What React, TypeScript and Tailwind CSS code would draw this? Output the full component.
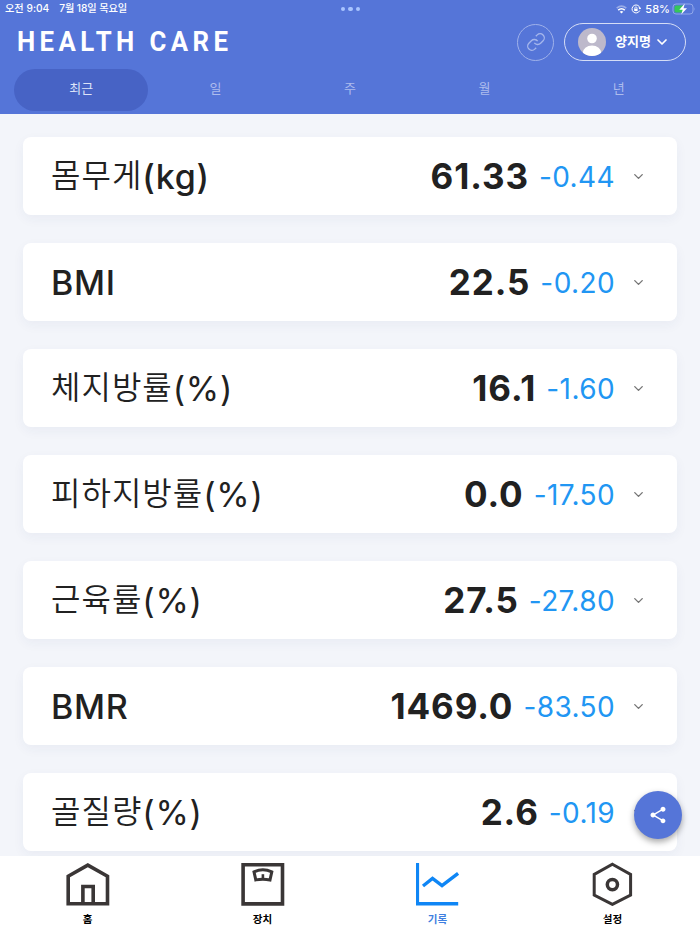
import React, { useState } from 'react';
import { ChevronDown } from 'lucide-react';

interface Metric {
  name: string;
  unit: string;
  value: string;
  delta: string;
}

const metrics: Metric[] = [
  { name: '몸무게', unit: '(kg)', value: '61.33', delta: '-0.44' },
  { name: '', unit: 'BMI', value: '22.5', delta: '-0.20' },
  { name: '체지방률', unit: '(%)', value: '16.1', delta: '-1.60' },
  { name: '피하지방률', unit: '(%)', value: '0.0', delta: '-17.50' },
  { name: '근육률', unit: '(%)', value: '27.5', delta: '-27.80' },
  { name: '', unit: 'BMR', value: '1469.0', delta: '-83.50' },
  { name: '골질량', unit: '(%)', value: '2.6', delta: '-0.19' },
];

const periods = ['최근', '일', '주', '월', '년'];

const HomeIcon = () => (
  <svg width="44" height="44" viewBox="0 0 44 44" fill="none" stroke="#3a3636" strokeWidth="3.6">
    <path d="M2.2 41.8V14.2L21.8 3.1 41.5 14.2v27.6z" />
    <path d="M16.9 41V24.5h10.3V41" />
  </svg>
);

const ScaleIcon = () => (
  <svg width="44" height="44" viewBox="0 0 44 44" fill="none" stroke="#3a3636" strokeWidth="3.6">
    <path d="M2.1 2.8h39.4v39.1H2.1z" />
    <path d="M13 9.8Q21.8 5.8 30.8 9.8L29 17.9Q21.8 16.6 14.8 17.9z" strokeWidth="3" />
    <path d="M21.9 12.2v4.4" strokeWidth="2.6" />
  </svg>
);

const ChartIcon = () => (
  <svg width="44" height="44" viewBox="0 0 44 44" fill="none" stroke="#0f86f5" strokeWidth="3.4">
    <path d="M1.4 1v40.7h40.8" />
    <path d="M7 24l9.5-7.5 9.5 7.2L42.1 11.3" />
  </svg>
);

const SettingsIcon = () => (
  <svg width="44" height="44" viewBox="0 0 44 44" fill="none" stroke="#3a3636" strokeWidth="3">
    <path d="M21.4 2.3l18.2 10.2v20.6L21.4 42.4 3.2 33.1V12.5z" />
    <circle cx="21.4" cy="22.6" r="5.1" strokeWidth="3.5" />
  </svg>
);

const navItems = [
  { label: '홈', icon: HomeIcon },
  { label: '장치', icon: ScaleIcon },
  { label: '기록', icon: ChartIcon },
  { label: '설정', icon: SettingsIcon },
];

const StatusBar = () => (
  <div className="h-[18px] flex items-center justify-between pl-[5px] pr-[4px] text-[10.2px] font-medium">
    <div className="w-[180px] flex gap-[10px] whitespace-nowrap">
      <span>오전 9:04</span>
      <span className="tracking-[-0.1px]">7월 18일 목요일</span>
    </div>
    <div className="flex gap-[3px]">
      <span className="w-[4.5px] h-[4.5px] rounded-full bg-[#a9c5ff]" />
      <span className="w-[4.5px] h-[4.5px] rounded-full bg-[#a9c5ff]" />
      <span className="w-[4.5px] h-[4.5px] rounded-full bg-[#a9c5ff]" />
    </div>
    <div className="w-[180px] flex items-center justify-end">
      <svg width="11" height="9" viewBox="0 0 11 9" fill="none" stroke="white" strokeWidth="1.6">
        <path d="M.7 3.2Q5.5-.9 10.3 3.2" opacity=".4" />
        <path d="M2.2 5.1Q5.5 2.4 8.8 5.1" />
        <path d="M5.5 8.6L3.7 6.7Q5.5 5.3 7.3 6.7z" fill="white" stroke="none" />
      </svg>
      <svg className="ml-[4px]" width="10" height="10" viewBox="0 0 10 10" fill="none" stroke="white">
        <path d="M8.7 6.6A4 4 0 1 1 9 4.4M7.7 3.9L9 5l.9-1.4" />
        <path d="M3.2 4.7h3.4v2.4H3.2z" fill="white" stroke="none" />
        <path d="M3.8 4.8V4q0-1.1 1.1-1.1T6 4v.8" strokeWidth=".8" />
      </svg>
      <span className="ml-[4px] text-[11px]">58%</span>
      <svg className="ml-[2px]" width="24" height="12" viewBox="0 0 24 12" fill="none">
        <rect x="1" y="1" width="20" height="10" rx="3" stroke="#91a8ea" />
        <path d="M4 2.5h7v7H4A1.5 1.5 0 0 1 2.5 8V4A1.5 1.5 0 0 1 4 2.5z" fill="#35c759" />
        <path d="M22.3 4.3q1.2 1.6 0 3.4z" fill="#91a8ea" />
        <path d="M12.8 .5L7.3 6.8h3.4l-1.5 4.7 5.8-6.3h-3.5z" fill="white" />
      </svg>
    </div>
  </div>
);

const MetricCard: React.FC<{ metric: Metric }> = ({ metric }) => (
  <div className="h-[78px] shrink-0 bg-white rounded-lg shadow-[0_4px_12px_rgba(40,50,110,0.05)] flex items-center justify-between pl-7 pr-[31px] text-[#212121]">
    <div className="flex items-baseline whitespace-nowrap">
      {metric.name && (
        <span className="relative -top-[2px] text-[32px] font-[350] tracking-[1px]">{metric.name}</span>
      )}
      <span className={`text-[34px] tracking-[0.7px] ${metric.unit === '(%)' ? 'font-normal' : 'font-medium'}`}>
        {metric.unit}
      </span>
    </div>
    <div className="flex items-center">
      <div className="flex items-center whitespace-nowrap pt-px">
        <span className="text-[35px] font-[650] tracking-[0.9px]">{metric.value}</span>
        <span className="ml-[10px] text-[28px] font-[430] tracking-[0.4px] text-[#2196f3]">{metric.delta}</span>
      </div>
      <ChevronDown className="ml-[16px] text-[#757575]" size={15} strokeWidth={2.2} />
    </div>
  </div>
);

const App: React.FC = () => {
  const [period, setPeriod] = useState('최근');
  const [activeNav, setActiveNav] = useState('기록');

  return (
    <div className="relative w-[700px] h-[933px] overflow-hidden flex flex-col bg-[#f3f5fa] font-['Inter','Noto_Sans_CJK_KR',sans-serif]">
      <header className="h-[114px] shrink-0 bg-[#5575d8] text-white">
        <StatusBar />
        <div className="h-[48px] flex items-center justify-between pl-[17px] pr-[14px]">
          <h1 className="origin-left scale-x-[0.92] whitespace-nowrap font-['Roboto'] text-[28px] font-bold tracking-[4.8px]">
            HEALTH CARE
          </h1>
          <div className="flex items-center gap-[10px]">
            <button className="w-[37px] h-[37px] rounded-full border border-[#9fb1ea] flex items-center justify-center text-[#a6b7ec]">
              <svg width="20" height="20" viewBox="0 0 24 24" fill="none" stroke="currentColor" strokeWidth="1.6">
                <path d="M10 13a5 5 0 0 0 7.54.54l3-3a5 5 0 0 0-7.07-7.07l-1.72 1.71" />
                <path d="M14 11a5 5 0 0 0-7.54-.54l-3 3a5 5 0 0 0 7.07 7.07l1.71-1.71" />
              </svg>
            </button>
            <button className="w-[122px] h-[38px] rounded-full border border-[#d5ddf6] flex items-center pl-[13px]">
              <svg width="28" height="28" viewBox="0 0 28 28">
                <clipPath id="avatar">
                  <circle cx="14" cy="14" r="14" />
                </clipPath>
                <g clipPath="url(#avatar)">
                  <path d="M0 0h28v28H0z" fill="#bdb9cb" />
                  <circle cx="14" cy="10.5" r="4.8" fill="white" />
                  <ellipse cx="14" cy="25" rx="9.3" ry="7.5" fill="white" />
                </g>
              </svg>
              <span className="ml-[9px] text-[13px] font-bold">양지명</span>
              <ChevronDown className="ml-[3px]" size={16} strokeWidth={2.6} />
            </button>
          </div>
        </div>
        <nav className="mt-[3px] px-[14px] h-[42px] grid grid-cols-5 text-[13px]">
          {periods.map((p) => (
            <button
              key={p}
              onClick={() => setPeriod(p)}
              className={`rounded-full pb-[3px] ${p === period ? 'bg-[#4763c5] text-[#dce3f8]' : 'text-[#adbced]'}`}
            >
              {p}
            </button>
          ))}
        </nav>
      </header>

      <main className="flex-1 min-h-0 overflow-hidden flex flex-col gap-7 px-[23px] pt-[23px]">
        {metrics.map((metric) => (
          <MetricCard key={metric.name + metric.unit} metric={metric} />
        ))}
      </main>

      <footer className="h-[77px] shrink-0 bg-white grid grid-cols-4">
        {navItems.map(({ label, icon: Icon }) => (
          <button key={label} onClick={() => setActiveNav(label)} className="flex flex-col items-center pt-[6px]">
            <Icon />
            <span
              className={`mt-[6px] text-[10.5px] leading-[16px] font-bold ${label === activeNav ? 'text-[#3f7fe0]' : 'text-black'}`}
            >
              {label}
            </span>
          </button>
        ))}
      </footer>

      <button className="absolute right-[18px] bottom-[94px] w-[48px] h-[48px] rounded-full bg-[#5575d8] shadow-[0_3px_6px_rgba(0,0,0,0.35)] flex items-center justify-center">
        <svg width="20" height="20" viewBox="0 0 24 24" fill="white">
          <path d="M18 16.08c-.76 0-1.44.3-1.96.77L8.91 12.7c.05-.23.09-.46.09-.7s-.04-.47-.09-.7l7.05-4.11c.54.5 1.25.81 2.04.81 1.66 0 3-1.34 3-3s-1.34-3-3-3-3 1.34-3 3c0 .24.04.47.09.7L8.04 9.81C7.5 9.31 6.79 9 6 9c-1.66 0-3 1.34-3 3s1.34 3 3 3c.79 0 1.5-.31 2.04-.81l7.12 4.16c-.05.21-.08.43-.08.65 0 1.61 1.31 2.92 2.92 2.92s2.92-1.31 2.92-2.92-1.31-2.92-2.92-2.92z" />
        </svg>
      </button>
    </div>
  );
};

export default App;
